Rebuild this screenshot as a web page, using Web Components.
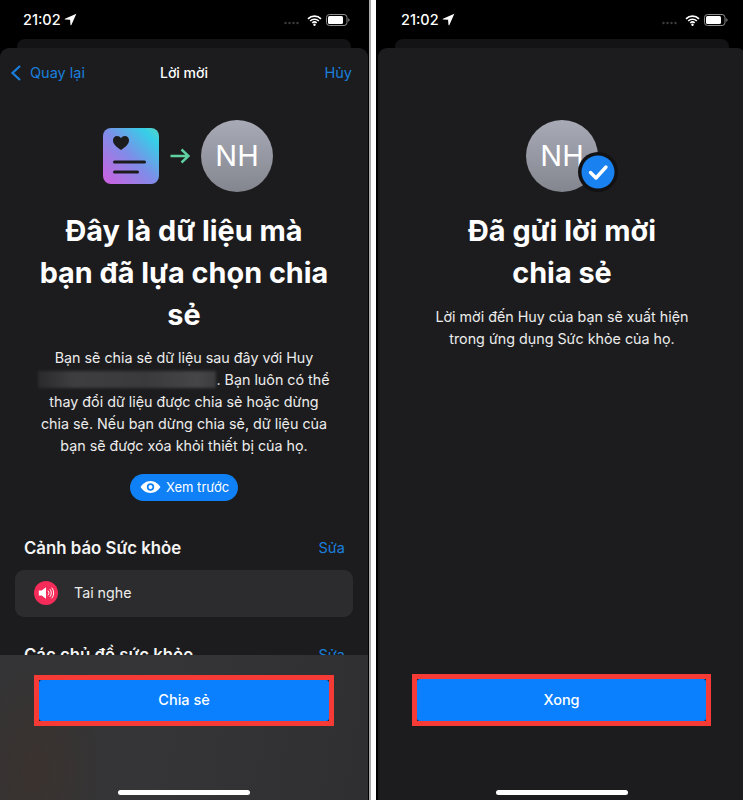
<!DOCTYPE html>
<html><head><meta charset="utf-8">
<style>
html,body{margin:0;padding:0;background:#fff;}
body{width:743px;height:800px;overflow:hidden;font-family:Inter,"Liberation Sans",sans-serif;}
#shots{display:flex;gap:7px;width:743px;height:800px;}
</style></head><body>
<div id="shots">
<phone-screen style="width:369px;box-shadow:2px 0 0 #a9a9a9">
  <sheet-nav></sheet-nav>
  <invite-hero kind="share"></invite-hero>
  <hero-text>Đây là dữ liệu mà<br>bạn đã lựa chọn chia<br>sẻ</hero-text>
  <share-body></share-body>
  <preview-pill></preview-pill>
  <health-section></health-section>
  <action-bar slot="footer" blurred label="Chia sẻ"></action-bar>
</phone-screen>
<phone-screen style="width:367px;--ml:2px">
  <div style="height:50px"></div>
  <invite-hero kind="done"></invite-hero>
  <hero-text>Đã gửi lời mời<br>chia sẻ</hero-text>
  <done-body></done-body>
  <action-bar slot="footer" label="Xong"></action-bar>
</phone-screen>
</div>
<script>
function el(name,css,html){
  customElements.define(name,class extends HTMLElement{
    constructor(){super();const r=this.attachShadow({mode:'open'});
      r.innerHTML='<style>'+css+'</style>'+(typeof html==='function'?html(this):html);}
  });
}
el('phone-screen',`
:host{display:block;flex:none;height:800px;background:#000;position:relative;overflow:hidden;color:#fff}
.inner{width:368px;height:800px;margin-left:var(--ml,0);position:relative}
.status{height:39px;box-sizing:border-box;display:flex;justify-content:space-between;align-items:flex-start;padding:11px 18px 0 23px}
.time{font:500 14.5px/17px Inter,"Liberation Sans",sans-serif;display:flex;align-items:center;gap:3px}
.right{display:flex;align-items:center;gap:4px;padding-top:3px}
.under{height:9px;margin:0 17px;background:#131315;border-radius:8px 8px 0 0}
.sheet{height:752px;background:#1c1c1e;border-radius:9px 9px 0 0;display:flow-root;position:relative;overflow:hidden}
`,`
<div class="inner">
<div class="status">
 <div class="time"><span>21:02</span><svg width="13" height="13" viewBox="0 0 12 12"><path d="M11.4.6.9 5.3c-.4.2-.3.7.1.7l4.600.3.4 4.700c0 .5.6.5.8.1z" fill="#fff"/></svg></div>
 <div class="right">
  <svg width="17" height="4" viewBox="0 0 17 4" style="margin:5px 2px 0 0"><g fill="#3c3c3e"><circle cx="1.500" cy="2" r="1.200"/><circle cx="5.500" cy="2" r="1.200"/><circle cx="9.500" cy="2" r="1.200"/><circle cx="13.500" cy="2" r="1.200"/></g></svg>
  <svg width="15" height="11" viewBox="0 0 15 11"><path d="M1 3.800a9.300 9.300 0 0 1 13 0M3.200 6a6.200 6.200 0 0 1 8.600 0M5.300 8a3.200 3.200 0 0 1 4.400 0" fill="none" stroke="#fff" stroke-width="1.700"/><circle cx="7.500" cy="9.700" r="1.200" fill="#fff"/></svg>
  <svg width="24" height="12" viewBox="0 0 24 12"><rect x=".5" y=".5" width="20.500" height="11" rx="3" fill="none" stroke="#8e8e90"/><rect x="2" y="2" width="15" height="8" rx="1.500" fill="#fff"/><path d="M22.300 4.200c.8.3 1.200 1 1.200 1.800s-.4 1.500-1.200 1.800z" fill="#8e8e90"/></svg>
 </div>
</div>
<div class="under"></div>
<div class="sheet"><slot></slot></div>
<slot name="footer"></slot>
</div>`);
el('sheet-nav',`
:host{display:flex;align-items:center;justify-content:space-between;height:50px;padding:0 16px 0 10px;position:relative;font:400 14.5px/18px Inter,"Liberation Sans",sans-serif;color:#1a7fdc}
.back{display:flex;align-items:center;gap:8px}
.title{position:absolute;left:0;right:0;text-align:center;color:#fff;font-weight:500;font-size:14px;pointer-events:none}
`,`<div class="back"><svg width="12" height="18" viewBox="0 0 12 18"><path d="M10 2 2.500 9l7.500 7" fill="none" stroke="#1a7fdc" stroke-width="2.200"/></svg><span>Quay lại</span></div><div class="title">Lời mời</div><span>Hủy</span>`);
el('person-avatar',`
:host{display:flex;width:72px;height:72px;border-radius:50%;align-items:center;justify-content:center;background:linear-gradient(#a8abb6,#84868f);color:#fff;font:400 29px/36px Inter,"Liberation Sans",sans-serif;flex:none}
`,`<slot></slot>`);
el('invite-hero',`
:host{display:flex;align-items:center;justify-content:center;height:72px;margin-top:22px}
:host([kind=share]){padding-left:8px}
.card{width:56px;height:56px;border-radius:8px;display:block}
.card{background:linear-gradient(45deg,#d05ee0 0%,#7d8ee8 50%,#36cfe8 85%,#5ad4c0 100%)}
.arrow{margin:0 10.5px 0 9.5px}
.wrap{position:relative;width:72px;height:72px}
.badge{position:absolute;left:52px;top:32px;width:40px;height:40px}
`,h=>h.getAttribute('kind')==='share'?`
<svg class="card" viewBox="0 0 56 56"><path d="M18 22C13 18.500 10 16 10 12.200 10 9.800 11.800 8 14 8c1.700 0 3.100.8 4 2.300C18.900 8.800 20.300 8 22 8c2.200 0 4 1.800 4 4.200C26 16 23 18.500 18 22z" fill="#1c1c1e"/><rect x="10" y="32.500" width="33" height="3" rx="1.500" fill="#1c1c1e"/><rect x="10" y="42.500" width="26" height="3" rx="1.500" fill="#1c1c1e"/></svg>
<svg class="arrow" width="22" height="18" viewBox="0 0 22 18"><path d="M1.500 9H19M12.500 2.500 19.500 9l-7 6.500" fill="none" stroke="#5fd1a0" stroke-width="2.400"/></svg>
<person-avatar>NH</person-avatar>`:`
<div class="wrap"><person-avatar>NH</person-avatar>
<svg class="badge" viewBox="0 0 40 40"><circle cx="20" cy="20" r="20" fill="#121214"/><circle cx="20" cy="20" r="16.500" fill="#1a82f0"/><path d="M12.500 20.500l5.500 5.500 10-11" fill="none" stroke="#fff" stroke-width="3.400" stroke-linecap="round" stroke-linejoin="round"/></svg></div>`);
el('hero-text',`
:host{display:block;text-align:center;color:#fff;font:700 28.8px/42px Inter,"Liberation Sans",sans-serif;margin-top:18px}
`,`<slot></slot>`);
el('share-body',`
:host{display:block;text-align:center;color:#ececec;font:400 14.3px/22px Inter,"Liberation Sans",sans-serif;margin-top:10.5px}
.blur{display:inline-block;width:178px;height:17px;vertical-align:-3px;background:linear-gradient(90deg,#2a2a2c,#3e3e40 20%,#3a3a3c 60%,#464648 90%,#3c3c3e);filter:blur(1.500px)}
`,`Bạn sẽ chia sẻ dữ liệu sau đây với Huy<br><span class="blur"></span>. Bạn luôn có thể<br>thay đổi dữ liệu được chia sẻ hoặc dừng<br>chia sẻ. Nếu bạn dừng chia sẻ, dữ liệu của<br>bạn sẽ được xóa khỏi thiết bị của họ.`);
el('preview-pill',`
:host{display:flex;justify-content:center;margin-top:17px}
.p{display:flex;align-items:center;gap:5px;height:27px;width:108px;box-sizing:border-box;padding-left:10px;border-radius:14px;background:#0f80f5;color:#fff;font:400 13px/16px Inter,"Liberation Sans",sans-serif}
`,`<div class="p"><svg width="21" height="14" viewBox="0 0 21 14"><path fill-rule="evenodd" d="M10.500 1C15 1 18.500 4 20.500 7c-2 3-5.500 6-10 6S2.500 10 .5 7C2.500 4 6 1 10.500 1zm0 2.300a3.700 3.700 0 1 0 0 7.400 3.700 3.700 0 0 0 0-7.400z" fill="#fff"/><circle cx="10.500" cy="7" r="2" fill="#fff"/></svg><span>Xem trước</span></div>`);
el('health-section',`
:host{display:block;margin-top:33px}
.h{display:flex;justify-content:space-between;align-items:center;padding:0 23px 0 24px;height:28px;font:600 16.8px/22px Inter,"Liberation Sans",sans-serif;color:#f4f4f4}
.e{font:400 14.5px/18px Inter,"Liberation Sans",sans-serif;color:#1a7fdc;padding-top:1px}
.row{margin:8px 15px 0;height:47px;background:#2c2c2e;border-radius:9px;display:flex;align-items:center;padding-left:19px;gap:16px;font:400 14.25px/18px Inter,"Liberation Sans",sans-serif;color:#ececec}
.ic{width:24px;height:24px;border-radius:50%;background:#f52c59;flex:none}
.h2{margin-top:24px}
`,`<div class="h"><span>Cảnh báo Sức khỏe</span><span class="e">Sửa</span></div>
<div class="row"><svg class="ic" viewBox="0 0 25 25"><path d="M5 10h3l4.500-3.500v12L8 15H5z" fill="#fff"/><path d="M14.500 10a3.500 3.500 0 0 1 0 5M16.500 8.500a6 6 0 0 1 0 8M18.500 7a8.500 8.500 0 0 1 0 11" fill="none" stroke="#fff" stroke-width="1"/></svg><span>Tai nghe</span></div>
<div class="h h2"><span>Các chủ đề sức khỏe</span><span class="e">Sửa</span></div>`);
el('done-body',`
:host{display:block;text-align:center;color:#ececec;font:400 14.3px/22px Inter,"Liberation Sans",sans-serif;margin-top:12px}
`,`Lời mời đến Huy của bạn sẽ xuất hiện<br>trong ứng dụng Sức khỏe của họ.`);
el('action-bar',`
:host{display:block;position:absolute;left:0;right:0;bottom:0;height:145px}
:host([blurred]){background:radial-gradient(ellipse 70px 110px at 35px 115px,#3a322e,rgba(58,50,46,0)),linear-gradient(100deg,#343436,#353537 45%,#2f2f31)}
.outer{position:absolute;left:34px;width:300px;top:20px;height:51px;box-sizing:border-box;border:5px solid #f63a36;background:#1c1c1e}
:host(:not([blurred])) .outer{width:299px;top:19px;height:52px}
.b{height:100%;background:#0a80ff;border-radius:3px;display:flex;align-items:center;justify-content:center;color:#fff;font:500 14.5px/18px Inter,"Liberation Sans",sans-serif;padding-bottom:1px;box-sizing:border-box}
.home{position:absolute;left:50%;margin-left:-66px;bottom:5px;width:132px;height:5px;border-radius:3px;background:#fff}
`,h=>`<div class="outer"><div class="b">${h.getAttribute('label')}</div></div><div class="home"></div>`);
</script>
</body></html>
